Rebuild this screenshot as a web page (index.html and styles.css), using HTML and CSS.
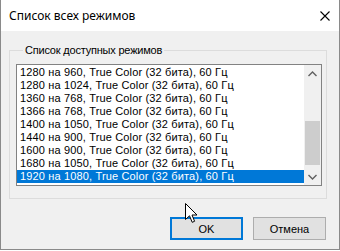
FILE: index.html
```html
<!DOCTYPE html>
<html lang="ru">
<head>
    <meta charset="UTF-8">
    <title>Список всех режимов</title>
    <link rel="stylesheet" href="styles.css">
</head>
<body>

    <div class="window">
        <!-- Title bar -->
        <div class="titlebar">
            <span class="title">Список всех режимов</span>
            <svg class="close" width="10" height="10" viewBox="0 0 10 10">
                <path d="M0.5 0.5 L9.5 9.5 M9.5 0.5 L0.5 9.5" stroke="#000" stroke-width="1.1" fill="none"/>
            </svg>
        </div>

        <div class="client">
            <fieldset class="group">
                <legend>Список доступных режимов</legend>

                <div class="listbox">
                    <div class="rows">
                        <div class="row">1280 на 960, True Color (32 бита), 60 Гц</div>
                        <div class="row">1280 на 1024, True Color (32 бита), 60 Гц</div>
                        <div class="row">1360 на 768, True Color (32 бита), 60 Гц</div>
                        <div class="row">1366 на 768, True Color (32 бита), 60 Гц</div>
                        <div class="row">1400 на 1050, True Color (32 бита), 60 Гц</div>
                        <div class="row">1440 на 900, True Color (32 бита), 60 Гц</div>
                        <div class="row">1600 на 900, True Color (32 бита), 60 Гц</div>
                        <div class="row">1680 на 1050, True Color (32 бита), 60 Гц</div>
                        <div class="row selected">1920 на 1080, True Color (32 бита), 60 Гц</div>
                    </div>

                    <div class="scrollbar">
                        <div class="arrow">
                            <svg width="9" height="6" viewBox="0 0 9 6"><path d="M0.5 5 L4.5 1 L8.5 5" stroke="#606060" stroke-width="1.4" fill="none"/></svg>
                        </div>
                        <div class="track">
                            <div class="thumb"></div>
                        </div>
                        <div class="arrow">
                            <svg width="9" height="6" viewBox="0 0 9 6"><path d="M0.5 1 L4.5 5 L8.5 1" stroke="#606060" stroke-width="1.4" fill="none"/></svg>
                        </div>
                    </div>
                </div>
            </fieldset>

            <div class="buttons">
                <button class="btn default">OK</button>
                <button class="btn">Отмена</button>
            </div>

            <!-- mouse pointer -->
            <svg class="cursor" width="13" height="21" viewBox="0 0 13 21">
                <path d="M0.5 0.5 L0.5 16.5 L4.5 12.8 L7.2 19.3 L9.6 18.3 L7 12 L12 12 Z" fill="#fff" stroke="#000" stroke-width="1" stroke-linejoin="miter"/>
            </svg>
        </div>
    </div>

</body>
</html>
```

FILE: styles.css
```css
/* General */
body {
    margin: 0;
    padding: 0;
    background: #fff;
    font-family: 'Liberation Sans', Arial, sans-serif;
    font-size: 11px;
    color: #000;
}

.window {
    width: 338px;
    height: 249px;
    border: 1px solid #8a8a8a;
    border-top: none;
    display: flex;
    flex-direction: column;
    background: #f0f0f0;
}

/* Title bar */
.titlebar {
    height: 31px;
    background: #fff;
    display: flex;
    align-items: center;
    justify-content: space-between;
    padding: 0 9px 0 8px;
}

.title {
    font-family: 'Noto Sans', 'Open Sans', sans-serif;
    font-size: 12px;
    margin-top: -1px;
}

/* Client area */
.client {
    flex: 1;
    position: relative;
    padding: 0 12px 0 8px;
}

.group {
    margin: 12px 0 0 0;
    padding: 7px 4px 12px 6px;
    border: 1px solid #dcdcdc;
    min-width: 0;
}

.group legend {
    padding: 0 2px;
    margin-left: 7px;
    line-height: 14px;
    letter-spacing: -0.2px;
}

.listbox {
    height: 120px;
    border: 1px solid #828282;
    background: #fff;
    display: flex;
}

.rows {
    flex: 1;
    padding-top: 1px;
}

.row {
    height: 13px;
    line-height: 13px;
    padding-left: 3px;
    white-space: nowrap;
    letter-spacing: 0.15px;
}

.row.selected {
    background: #0078d7;
    color: #fff;
}

/* Scrollbar */
.scrollbar {
    width: 17px;
    display: flex;
    flex-direction: column;
    background: #f0f0f0;
}

.arrow {
    height: 17px;
    display: flex;
    align-items: center;
    justify-content: center;
}

.track {
    flex: 1;
    padding-top: 39px;
}

.thumb {
    height: 44px;
    margin: 0 1px;
    background: #cdcdcd;
}

/* Buttons */
.buttons {
    display: flex;
    justify-content: flex-end;
    gap: 10px;
    margin-top: 18px;
    padding-right: 1px;
}

.btn {
    width: 73px;
    height: 23px;
    padding: 0;
    background: #e1e1e1;
    border: 1px solid #adadad;
    font-family: 'Liberation Sans', Arial, sans-serif;
    font-size: 11px;
    color: #000;
}

.btn.default {
    border: 2px solid #0078d7;
}

.cursor {
    position: absolute;
    left: 184px;
    top: 172px;
}
```
